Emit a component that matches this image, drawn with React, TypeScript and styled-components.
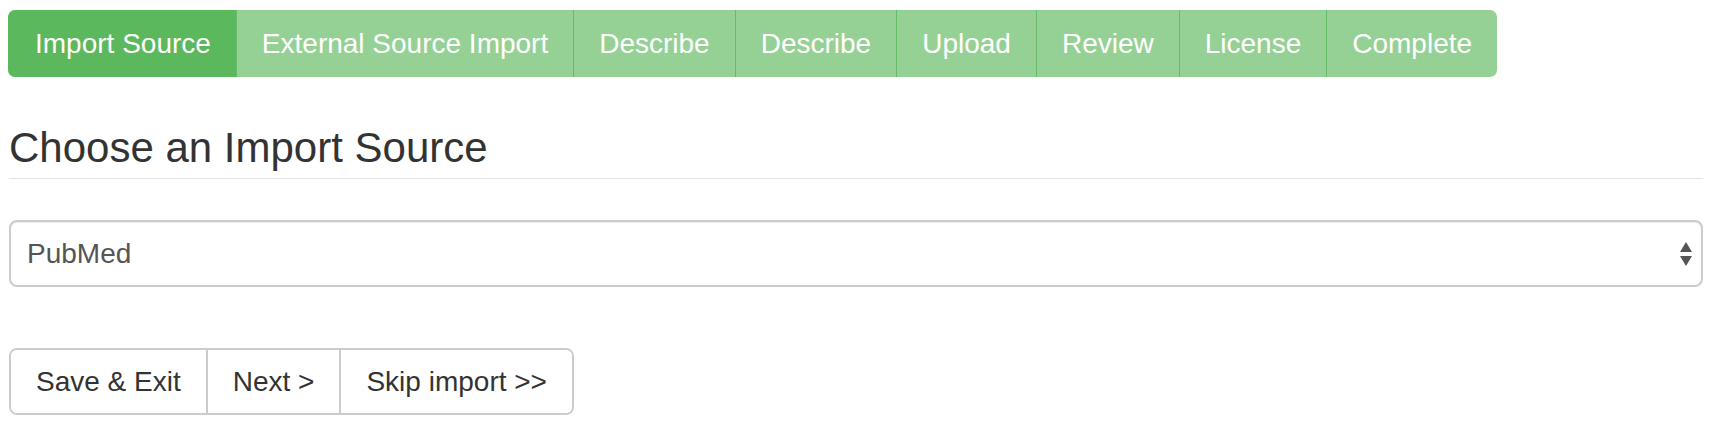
import styled, { createGlobalStyle } from 'styled-components';

const GlobalStyle = createGlobalStyle`
  body {
    margin: 0;
    background: #fff;
    font-family: "Liberation Sans", Arial, sans-serif;
    color: #333;
  }
`;

const Page = styled.div`
  padding: 10px 13px 0 9px;
`;

const Steps = styled.div`
  display: inline-flex;
  margin-left: -1px;
`;

const Step = styled.div<{ $active: boolean }>`
  height: 67px;
  box-sizing: border-box;
  display: flex;
  align-items: center;
  padding: 0 25px;
  font-size: 28px;
  color: #fff;
  background: ${props => props.$active ? '#5cb85c' : '#95d195'};
  border-left: 1px solid ${props => props.$active ? '#5cb85c' : '#66bc66'};

  &:first-child {
    border-left-color: #5cb85c;
    border-radius: 7px 0 0 7px;
    padding-left: 26px;
  }

  &:last-child {
    border-radius: 0 7px 7px 0;
  }
`;

const Heading = styled.h2`
  margin: 48px 0 0;
  padding-bottom: 7px;
  border-bottom: 1px solid #e5e5e5;
  font-size: 42px;
  line-height: 46px;
  font-weight: 400;
  color: #333;
`;

const SelectWrap = styled.div`
  position: relative;
  margin-top: 41px;
`;

const Select = styled.select`
  display: block;
  width: 100%;
  height: 67px;
  box-sizing: border-box;
  padding: 0 16px;
  appearance: none;
  background: #fff;
  border: 2px solid #ccc;
  border-radius: 8px;
  box-shadow: inset 0 1px 1px rgba(0, 0, 0, 0.075);
  font-family: "Liberation Sans", Arial, sans-serif;
  font-size: 28px;
  color: #555;
  outline: none;
`;

const Arrows = styled.svg`
  position: absolute;
  right: 10px;
  top: 21px;
  pointer-events: none;
`;

const ButtonGroup = styled.div`
  display: inline-flex;
  margin-top: 61px;
  border: 2px solid #ccc;
  border-radius: 8px;
  overflow: hidden;
`;

const Button = styled.button`
  height: 63px;
  padding: 0 25px;
  background: #fff;
  border: none;
  border-left: 2px solid #ccc;
  font-family: "Liberation Sans", Arial, sans-serif;
  font-size: 28px;
  color: #333;
  cursor: pointer;

  &:first-child {
    border-left: none;
  }
`;

const STEPS = [
  'Import Source',
  'External Source Import',
  'Describe',
  'Describe',
  'Upload',
  'Review',
  'License',
  'Complete',
];

export default function App() {
  return (
    <Page>
      <GlobalStyle />
      <Steps>
        {STEPS.map((label, index) => (
          <Step key={index} $active={index === 0}>{label}</Step>
        ))}
      </Steps>

      <Heading>Choose an Import Source</Heading>

      <SelectWrap>
        <Select defaultValue="pubmed">
          <option value="pubmed">PubMed</option>
        </Select>
        <Arrows width="14" height="26" viewBox="0 0 14 26">
          <path d="M7 1 L13 11 L1 11 Z" fill="#555" />
          <path d="M1 15 L13 15 L7 25 Z" fill="#555" />
        </Arrows>
      </SelectWrap>

      <ButtonGroup>
        <Button>Save &amp; Exit</Button>
        <Button>Next &gt;</Button>
        <Button>Skip import &gt;&gt;</Button>
      </ButtonGroup>
    </Page>
  );
}
